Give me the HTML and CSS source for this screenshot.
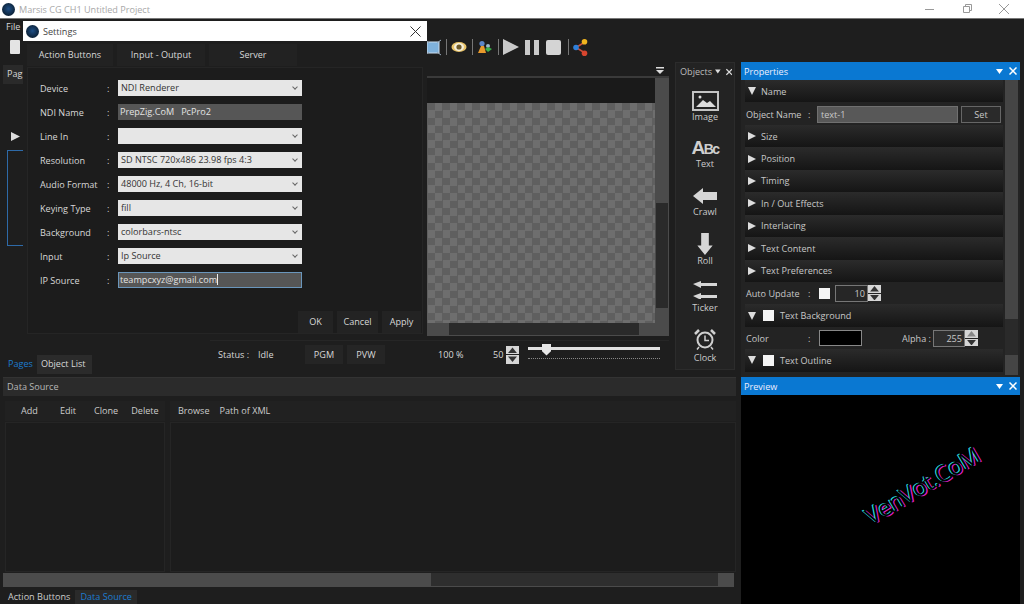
FILE: index.html
```html
<!DOCTYPE html>
<html lang="en">
<head>
  <meta charset="UTF-8" />
  <title>Marsis CG CH1 Untitled Project</title>
  <link rel="stylesheet" href="styles.css">
</head>
<body>
  <header class="titlebar">
    <div class="app-logo"></div>
    <span class="app-title">Marsis CG CH1 Untitled Project</span>
    <div class="win-btns">
      <svg width="12" height="12" viewBox="0 0 12 12"><path d="M1 6.500h9" stroke="#999" fill="none"/></svg>
      <svg width="12" height="12" viewBox="0 0 12 12"><path d="M2.500 3.500h6v6h-6zM4.500 3.500v-2h6v6h-2" stroke="#999" fill="none"/></svg>
      <svg width="12" height="12" viewBox="0 0 12 12"><path d="M1 1l10 10M11 1L1 11" stroke="#999" fill="none"/></svg>
    </div>
  </header>

  <div class="menubar">File</div>

  <div class="toolbar">
    <div class="tool-new"></div>
    <div class="tool-icons">
      <svg width="16" height="18" viewBox="0 0 16 18"><rect x="2" y="4" width="12" height="11" fill="#7fb2dc" stroke="#cde" /><path d="M0 2l4 3M16 2l-4 3M0 17l4-3M16 17l-4-3" stroke="#9ab" /></svg>
      <i class="tool-sep"></i>
      <svg width="16" height="12" viewBox="0 0 16 12"><ellipse cx="8" cy="6" rx="7.500" ry="5" fill="#e9c46a"/><ellipse cx="8" cy="6" rx="5" ry="4" fill="#f5efdc"/><circle cx="8" cy="6" r="2.600" fill="#6e5a2a"/></svg>
      <i class="tool-sep"></i>
      <svg width="16" height="14" viewBox="0 0 16 14"><circle cx="5" cy="3.500" r="2.600" fill="#5c86c8"/><path d="M1 13l3-7h3l2 7z" fill="#e89a2c"/><circle cx="11" cy="6" r="2" fill="#9bc"/><path d="M8 9l3-2 4 2-4 3z" fill="#3cb04a"/></svg>
      <i class="tool-sep"></i>
      <svg width="16" height="16" viewBox="0 0 16 16"><path d="M0 0l16 8-16 8z" fill="#c9c9c9"/></svg>
      <svg class="tool-pause" width="14" height="15" viewBox="0 0 14 15"><rect width="5" height="15" fill="#c9c9c9"/><rect x="9" width="5" height="15" fill="#c9c9c9"/></svg>
      <svg class="tool-stop" width="15" height="15" viewBox="0 0 15 15"><rect width="15" height="15" rx="2" fill="#d4d4d4"/></svg>
      <i class="tool-sep"></i>
      <svg width="15" height="17" viewBox="0 0 15 17"><path d="M12 3L3 8.500l9 5.500" stroke="#c8503c" stroke-width="1.600" fill="none"/><circle cx="11.500" cy="2.800" r="2.800" fill="#f0b41e"/><circle cx="3" cy="8.500" r="2.800" fill="#2f7fd8"/><circle cx="11.500" cy="14.200" r="2.800" fill="#d8452e"/></svg>
    </div>
  </div>

  <div class="workspace">
    <div class="left-col">
      <div class="top-row">
        <section class="pages-panel">
          <div class="pages-tab">Pag</div>
          <div class="pages-body">
            <svg class="pages-play" width="9" height="9" viewBox="0 0 9 9"><path d="M0 0l9 4.500L0 9z" fill="#ddd"/></svg>
            <div class="pages-thumb"></div>
          </div>
          <div class="doc-tabs">
            <span class="doc-tab active">Pages</span>
            <span class="doc-tab current">Object List</span>
          </div>
        </section>

        <section class="canvas-col">
          <div class="canvas-head">
            <svg width="8" height="8" viewBox="0 0 8 8"><path d="M0 0h8v1.500H0zM0 3h8L4 7z" fill="#ddd"/></svg>
          </div>
          <div class="canvas-frame">
            <div class="canvas-main">
              <div class="canvas-view">
                <div class="canvas-dark"></div>
                <div class="checker"></div>
              </div>
              <div class="vscroll"><div class="vscroll-thumb"></div></div>
            </div>
            <div class="hscroll"><div class="hscroll-thumb"></div></div>
          </div>
          <div class="status-bar">
            <span class="status-label">Status :</span>
            <span class="status-idle">Idle</span>
            <span class="status-btn first">PGM</span>
            <span class="status-btn">PVW</span>
            <span class="zoom-val">100 %</span>
            <span class="zoom-num">50</span>
            <div class="spin">
              <svg viewBox="0 0 8 5" width="8" height="5"><path d="M0 5l4-5 4 5z" fill="#333"/></svg>
              <svg viewBox="0 0 8 5" width="8" height="5"><path d="M0 0l4 5 4-5z" fill="#333"/></svg>
            </div>
            <div class="slider">
              <div class="slider-track"></div>
              <div class="slider-thumb"></div>
              <div class="slider-ticks"></div>
            </div>
          </div>
        </section>

        <aside class="objects-panel">
          <div class="objects-head">
            <span>Objects</span>
            <svg width="7" height="5" viewBox="0 0 7 5"><path d="M0 0h7L3.500 5z" fill="#ddd"/></svg>
            <svg class="close-x" width="8" height="8" viewBox="0 0 8 8"><path d="M0.500 0.500l7 7M7.500 0.500l-7 7" stroke="#ddd" stroke-width="1.500"/></svg>
          </div>
          <div class="object-item obj-image">
            <svg width="27" height="20" viewBox="0 0 27 20"><rect x="1" y="1" width="25" height="18" fill="none" stroke="#c4c4c4" stroke-width="2"/><circle cx="8" cy="6" r="1.500" fill="#ddd"/><path d="M4 16l7-7 4 3 3-2 6 6z" fill="#ddd"/></svg>
            <span>Image</span>
          </div>
          <div class="object-item obj-text">
            <span class="abc">A<small>Bc</small></span>
            <span>Text</span>
          </div>
          <div class="object-item obj-crawl">
            <svg width="24" height="16" viewBox="0 0 24 16"><path d="M0 8l10-8v4h14v8H10v4z" fill="#d6d6d6"/></svg>
            <span>Crawl</span>
          </div>
          <div class="object-item obj-roll">
            <svg width="16" height="22" viewBox="0 0 16 23"><path d="M8 23L0 13h4V0h8v13h4z" fill="#d6d6d6"/></svg>
            <span>Roll</span>
          </div>
          <div class="object-item obj-ticker">
            <svg width="24" height="18" viewBox="0 0 24 18"><path d="M0 3l8-3v2h16v3H8v2zM0 15l8-3v2h16v3H8v2z" fill="#d6d6d6"/></svg>
            <span>Ticker</span>
          </div>
          <div class="object-item obj-clock">
            <svg width="22" height="21" viewBox="0 0 22 21"><circle cx="11" cy="11" r="7.500" fill="none" stroke="#d0d0d0" stroke-width="2"/><path d="M11 6.500V11.500h4" stroke="#d0d0d0" stroke-width="1.500" fill="none"/><path d="M1 5l4-4M21 5l-4-4" stroke="#d0d0d0" stroke-width="2.500"/><path d="M5 18l-2 2.500M17 18l2 2.500" stroke="#d0d0d0" stroke-width="1.500"/></svg>
            <span>Clock</span>
          </div>
        </aside>
      </div>

      <section class="data-panel">
        <div class="data-head">Data Source</div>
        <div class="data-body">
          <div class="data-left">
            <div class="data-tools">
              <span class="data-btn add">Add</span>
              <span class="data-btn edit">Edit</span>
              <span class="data-btn clone">Clone</span>
              <span class="data-btn delete">Delete</span>
            </div>
            <div class="data-list"></div>
          </div>
          <div class="data-right">
            <div class="data-tools">
              <span class="data-btn browse">Browse</span>
              <span class="data-btn">Path of XML</span>
            </div>
            <div class="data-list"></div>
          </div>
        </div>
        <div class="data-scroll"><div class="data-scroll-thumb"></div></div>
      </section>

      <div class="bottom-tabs">
        <span class="bottom-tab">Action Buttons</span>
        <span class="bottom-tab active">Data Source</span>
      </div>
    </div>

    <div class="right-col">
      <section class="props-panel">
        <div class="blue-head">
          <span>Properties</span>
          <svg width="7" height="5" viewBox="0 0 7 5"><path d="M0 0h7L3.500 5z" fill="#fff"/></svg>
          <svg class="close-x" width="8" height="8" viewBox="0 0 8 8"><path d="M0.500 0.500l7 7M7.500 0.500l-7 7" stroke="#fff" stroke-width="1.500"/></svg>
        </div>
        <div class="props-body">
          <div class="props-list">
            <div class="prop-section"><i class="tri-down"></i>Name</div>
            <div class="prop-row name-row">
              <span class="prop-label">Object Name</span><span class="prop-colon">:</span>
              <span class="name-input">text-1</span>
              <span class="set-btn">Set</span>
            </div>
            <div class="prop-section"><i class="tri-right"></i>Size</div>
            <div class="prop-section"><i class="tri-right"></i>Position</div>
            <div class="prop-section"><i class="tri-right"></i>Timing</div>
            <div class="prop-section"><i class="tri-right"></i>In / Out Effects</div>
            <div class="prop-section"><i class="tri-right"></i>Interlacing</div>
            <div class="prop-section"><i class="tri-right"></i>Text Content</div>
            <div class="prop-section"><i class="tri-right"></i>Text Preferences</div>
            <div class="prop-row">
              <span class="prop-label">Auto Update</span><span class="prop-colon">:</span>
              <i class="check"></i>
              <span class="num-input auto-num">10</span>
              <div class="spin small">
                <svg viewBox="0 0 8 5" width="7" height="4"><path d="M0 5l4-5 4 5z" fill="#333"/></svg>
                <svg viewBox="0 0 8 5" width="7" height="4"><path d="M0 0l4 5 4-5z" fill="#333"/></svg>
              </div>
            </div>
            <div class="prop-section"><i class="tri-down"></i><i class="check sec-check"></i>Text Background</div>
            <div class="prop-row">
              <span class="prop-label">Color</span><span class="prop-colon">:</span>
              <i class="color-box"></i>
              <span class="alpha-label">Alpha :</span>
              <span class="num-input alpha-num">255</span>
              <div class="spin small">
                <svg viewBox="0 0 8 5" width="7" height="4"><path d="M0 5l4-5 4 5z" fill="#888"/></svg>
                <svg viewBox="0 0 8 5" width="7" height="4"><path d="M0 0l4 5 4-5z" fill="#333"/></svg>
              </div>
            </div>
            <div class="prop-section"><i class="tri-down"></i><i class="check sec-check"></i>Text Outline</div>
          </div>
          <div class="props-scroll"><div class="props-scroll-thumb"></div></div>
        </div>
      </section>

      <section class="preview-panel">
        <div class="blue-head">
          <span>Preview</span>
          <svg width="7" height="5" viewBox="0 0 7 5"><path d="M0 0h7L3.500 5z" fill="#fff"/></svg>
          <svg class="close-x" width="8" height="8" viewBox="0 0 8 8"><path d="M0.500 0.500l7 7M7.500 0.500l-7 7" stroke="#fff" stroke-width="1.500"/></svg>
        </div>
        <div class="preview-body">
          <span class="watermark">VenVot.CoM</span>
        </div>
      </section>
    </div>
  </div>

  <!-- settings dialog sits over the main window -->
  <div class="dialog">
    <div class="dialog-title">
      <div class="app-logo"></div>
      <span>Settings</span>
      <svg width="11" height="11" viewBox="0 0 11 11"><path d="M0.500 0.500l10 10M10.500 0.500l-10 10" stroke="#333" fill="none"/></svg>
    </div>
    <div class="dialog-tabs">
      <span class="dialog-tab">Action Buttons</span>
      <span class="dialog-tab wide">Input - Output</span>
      <span class="dialog-tab wide">Server</span>
    </div>
    <div class="dialog-body">
      <div class="form-row"><label>Device</label><b>:</b><div class="select">NDI Renderer<i></i></div></div>
      <div class="form-row"><label>NDI Name</label><b>:</b><div class="text-field">PrepZig.CoM&nbsp;&nbsp; PcPro2</div></div>
      <div class="form-row"><label>Line In</label><b>:</b><div class="select"><i></i></div></div>
      <div class="form-row"><label>Resolution</label><b>:</b><div class="select">SD NTSC 720x486 23.98 fps 4:3<i></i></div></div>
      <div class="form-row"><label>Audio Format</label><b>:</b><div class="select">48000 Hz, 4 Ch, 16-bit<i></i></div></div>
      <div class="form-row"><label>Keying Type</label><b>:</b><div class="select">fill<i></i></div></div>
      <div class="form-row"><label>Background</label><b>:</b><div class="select">colorbars-ntsc<i></i></div></div>
      <div class="form-row"><label>Input</label><b>:</b><div class="select">Ip Source<i></i></div></div>
      <div class="form-row"><label>IP Source</label><b>:</b><div class="text-field focused">teampcxyz@gmail.com<u></u></div></div>
      <div class="dialog-btns">
        <span class="dialog-btn ok">OK</span>
        <span class="dialog-btn cancel">Cancel</span>
        <span class="dialog-btn apply">Apply</span>
      </div>
    </div>
  </div>
</body>
</html>
```

FILE: styles.css
```css
* {
  margin: 0;
  padding: 0;
  box-sizing: border-box;
}

body {
  width: 1024px;
  height: 604px;
  overflow: hidden;
  background: #1e1e1e;
  color: #d8d8d8;
  font-family: "Open Sans", "Noto Sans", sans-serif;
  font-size: 9.1px;
  display: flex;
  flex-direction: column;
}

/* title bar */
.titlebar {
  height: 19px;
  background: #fff;
  border-bottom: 1px solid #777;
  display: flex;
  align-items: center;
  padding-left: 2px;
}

.app-logo {
  width: 13px;
  height: 13px;
  border-radius: 50%;
  background: radial-gradient(circle at 50% 45%, #1f4f86, #0c2238 70%);
}

.app-title {
  margin-left: 4px;
  color: #a8a8a8;
}

.win-btns {
  margin-left: auto;
  display: flex;
  gap: 25px;
  padding-right: 14px;
}

.menubar {
  height: 15px;
  padding: 1px 6px 0;
  line-height: 14px;
}

.toolbar {
  height: 28px;
  display: flex;
  align-items: center;
  padding: 0 10px 2px;
}

.tool-new {
  width: 10px;
  height: 14px;
  background: #e4e4e4;
  border-radius: 1px;
}

.tool-icons {
  margin-left: 405px;
  display: flex;
  align-items: center;
  gap: 4.500px;
}

.tool-sep {
  width: 1px;
  height: 16px;
  background: #777;
}

.tool-pause {
  margin-left: 1.500px;
}

.tool-stop {
  margin: 0 2.500px 0 2px;
}

/* main grid */
.workspace {
  flex: 1;
  min-height: 0;
  display: grid;
  grid-template-columns: 736px 279px;
  column-gap: 5px;
}

.left-col {
  display: flex;
  flex-direction: column;
  padding-left: 3px;
}

.top-row {
  height: 315px;
  display: flex;
}

.pages-panel {
  width: 207px;
  display: flex;
  flex-direction: column;
}

.pages-tab {
  width: 20px;
  height: 19px;
  margin-top: 3px;
  padding-left: 4px;
  line-height: 18px;
  background: #2a2a2a;
}

.pages-body {
  flex: 1;
  padding: 48px 0 0 8px;
}

.pages-play {
  display: block;
}

.pages-thumb {
  margin: 9px 0 0 -4px;
  width: 40px;
  height: 96px;
  border: 1px solid #2e6aa8;
}

.doc-tabs {
  height: 19px;
  display: flex;
  padding-left: 1px;
  margin-bottom: 3px;
}

.doc-tab {
  padding: 0 4px;
  line-height: 18px;
}

.doc-tab.active {
  color: #1c7cd0;
}

.doc-tab.current {
  background: #2b2b2b;
  width: 55px;
}

.canvas-col {
  width: 459px;
  display: flex;
  flex-direction: column;
}

.canvas-head {
  height: 14px;
  padding-top: 5px;
  display: flex;
  justify-content: flex-end;
  padding-right: 5px;
}

.canvas-frame {
  height: 260px;
  border-top: 2px solid #3a3a3a;
  display: flex;
  flex-direction: column;
}

.canvas-main {
  flex: 1;
  min-height: 0;
  display: flex;
}

.canvas-view {
  flex: 1;
  display: flex;
  flex-direction: column;
}

.canvas-dark {
  height: 25px;
  background: #1a1a1a;
}

.checker {
  flex: 1;
  background-color: #6e6e6e;
  background-image: conic-gradient(#5f5f5f 25%, transparent 0 50%, #5f5f5f 0 75%, transparent 0);
  background-size: 15px 15px;
}

.vscroll {
  width: 14px;
  background: #4b4b4b;
  padding-top: 125px;
}

.vscroll-thumb {
  height: 105px;
  background: #2a2a2a;
  margin: 0 1px;
}

.hscroll {
  height: 13px;
  background: #4b4b4b;
  padding-left: 239px;
}

.hscroll-thumb {
  width: 190px;
  height: 12px;
  background: #2a2a2a;
}

.status-bar {
  margin-top: 4px;
  height: 28px;
  display: flex;
  align-items: center;
  padding-left: 8px;
  border-top: 1px solid #262626;
}

.status-label {
  width: 40px;
}

.status-idle {
  width: 47px;
}

.status-btn {
  width: 38px;
  height: 19px;
  line-height: 19px;
  text-align: center;
  margin-left: 4px;
  background: #252525;
}

.status-btn.first {
  margin-left: 0;
}

.zoom-val {
  margin-left: 53px;
  width: 55px;
}

.zoom-num {
  width: 12px;
}

.spin {
  margin-left: 1px;
  width: 13px;
  height: 18px;
  display: flex;
  flex-direction: column;
  gap: 1px;
}

.spin svg {
  flex: 1;
  width: 100%;
  background: #d6d6d6;
  padding: 1px 2px;
}

.spin.small {
  height: 16px;
  margin-left: 0;
}

.slider {
  position: relative;
  margin-left: 9px;
  width: 132px;
  height: 20px;
}

.slider-track {
  margin-top: 2px;
  height: 3px;
  background: #e2e2e2;
}

.slider-ticks {
  margin-top: 8px;
  border-top: 1px dotted #888;
}

.slider-thumb {
  position: absolute;
  left: 14px;
  top: -1px;
  width: 9px;
  height: 12px;
  background: #e8e8e8;
  clip-path: polygon(0 0, 100% 0, 100% 65%, 50% 100%, 0 65%);
}

.objects-panel {
  margin-left: 6px;
  width: 60px;
  height: 308px;
  background: #232323;
  border: 1px solid #2c2c2c;
  display: flex;
  flex-direction: column;
  align-items: center;
}

.objects-head {
  width: 100%;
  height: 17px;
  display: flex;
  align-items: center;
  gap: 3px;
  padding-left: 4px;
  color: #bbb;
}

.close-x {
  margin-left: auto;
}

.objects-head .close-x {
  margin: 0 2px;
}

.object-item {
  display: flex;
  flex-direction: column;
  align-items: center;
  color: #ccc;
  line-height: 12px;
}

.obj-image {
  margin-top: 11px;
}

.obj-text {
  margin-top: 17px;
  gap: 2px;
}

.abc {
  height: 16px;
  line-height: 16px;
  font-size: 19px;
  font-weight: 700;
  letter-spacing: -1.500px;
  color: #cfcfcf;
  font-family: "Liberation Sans", sans-serif;
}

.abc small {
  font-size: 14px;
}

.obj-crawl {
  margin-top: 18px;
  gap: 2px;
}

.obj-roll {
  margin-top: 15px;
}

.obj-ticker {
  margin-top: 14px;
  gap: 3px;
}

.obj-clock {
  margin-top: 15px;
  gap: 2px;
}

/* data source */
.data-panel {
  height: 213px;
  display: flex;
  flex-direction: column;
  border-top: 1px solid #333;
}

.data-head {
  height: 18px;
  background: #2b2b2b;
  padding-left: 4px;
  line-height: 17px;
  color: #b8b8b8;
}

.data-body {
  flex: 1;
  min-height: 0;
  display: flex;
  gap: 5px;
  padding: 5px 0 0 2px;
}

.data-left {
  width: 160px;
  display: flex;
  flex-direction: column;
}

.data-right {
  flex: 1;
  display: flex;
  flex-direction: column;
}

.data-tools {
  height: 20px;
  display: flex;
  align-items: center;
  background: #212121;
}

.data-btn {
  line-height: 20px;
  color: #ccc;
}

.add { margin-left: 16px; }
.edit { margin-left: 22px; }
.clone { margin-left: 18px; }
.delete { margin-left: 13px; }
.browse { margin: 0 10px 0 8px; }

.data-list {
  flex: 1;
  margin-top: 1px;
  border: 1px solid #252525;
  background: #1c1c1c;
}

.data-scroll {
  height: 14px;
  margin: 1px 2px 3px 0;
  background: #4b4b4b;
  padding-left: 428px;
}

.data-scroll-thumb {
  width: 287px;
  height: 13px;
  background: #2e2e2e;
}

.bottom-tabs {
  flex: 1;
  display: flex;
  padding-left: 1px;
}

.bottom-tab {
  padding: 0 4px;
  line-height: 14px;
  color: #ccc;
}

.bottom-tab.active {
  color: #1c7cd0;
  background: #2a2a2a;
  margin-left: 1px;
  padding: 0 5px;
}

/* right column */
.right-col {
  display: flex;
  flex-direction: column;
  min-height: 0;
}

.blue-head {
  height: 18px;
  background: #0a78d2;
  color: #eef;
  display: flex;
  align-items: center;
  gap: 4px;
  padding: 0 3px;
}

.blue-head span {
  margin-right: auto;
}

.blue-head .close-x {
  margin-left: 2px;
}

.props-panel {
  height: 315px;
  display: flex;
  flex-direction: column;
}

.props-body {
  flex: 1;
  min-height: 0;
  display: flex;
  background: #232323;
  padding-left: 4px;
  overflow: hidden;
}

.props-list {
  width: 258px;
}

.prop-section,
.prop-row {
  height: 22.450px;
  display: flex;
  align-items: center;
  padding-left: 3px;
  color: #c8c8c8;
}

.prop-row {
  padding-left: 1px;
}

.prop-row.name-row {
  padding-top: 2px;
}

.prop-section {
  background: linear-gradient(#2b2b2b, #151515);
}

.tri-right {
  width: 0;
  height: 0;
  border-left: 8px solid #ddd;
  border-top: 4px solid transparent;
  border-bottom: 4px solid transparent;
  margin-right: 5px;
}

.tri-down {
  width: 0;
  height: 0;
  border-top: 8px solid #ddd;
  border-left: 4px solid transparent;
  border-right: 4px solid transparent;
  margin-right: 5px;
}

.prop-row .prop-label {
  width: 61px;
  white-space: nowrap;
}

.prop-colon {
  width: 9px;
  margin-left: 1px;
}

.name-input {
  width: 141px;
  height: 17px;
  line-height: 15px;
  padding-left: 3px;
  background: #585858;
  border: 1px solid #707070;
}

.set-btn {
  width: 40px;
  height: 17px;
  line-height: 15px;
  text-align: center;
  margin-left: 3px;
  border: 1px solid #666;
  background: #2a2a2a;
}

.check {
  display: block;
  width: 11px;
  height: 11px;
  background: #f4f4f4;
  margin-left: 2px;
}

.sec-check {
  margin: 0 6px 0 2px;
}

.num-input {
  height: 17px;
  line-height: 15px;
  text-align: right;
  padding-right: 2px;
  border: 1px solid #777;
  background: #262626;
}

.auto-num {
  width: 33px;
  margin-left: 5px;
}

.color-box {
  display: block;
  width: 43px;
  height: 16px;
  background: #000;
  border: 1px solid #888;
  margin-left: 2px;
}

.alpha-label {
  margin-left: 40px;
}

.alpha-num {
  width: 32px;
  margin-left: 2px;
  background: #2e2e2e;
}

.props-scroll {
  width: 13px;
  margin: 0 0 2px 2px;
  background: #454545;
  padding-top: 239px;
}

.props-scroll-thumb {
  height: 36px;
  background: #2a2a2a;
}

.preview-panel {
  flex: 1;
  display: flex;
  flex-direction: column;
}

.preview-body {
  position: relative;
  flex: 1;
  background: #000;
}

.watermark {
  position: absolute;
  left: 117px;
  top: 74px;
  transform: rotate(-30.500deg);
  font-size: 23px;
  letter-spacing: -0.300px;
  color: #000;
  text-shadow: -1px -1px 0 #27d0d8, 1px 1px 0 #e020c8;
  font-family: "Open Sans", sans-serif;
}

/* settings dialog */
.dialog {
  position: absolute;
  left: 23px;
  top: 21px;
  width: 404px;
  height: 319px;
  background: #1e1e1e;
  display: flex;
  flex-direction: column;
}

.dialog-title {
  height: 20px;
  background: #fff;
  color: #444;
  display: flex;
  align-items: center;
  padding: 0 6px 0 3px;
  gap: 4px;
}

.dialog-title svg {
  margin-left: auto;
}

.dialog-tabs {
  height: 22px;
  margin-top: 3px;
  padding-left: 4px;
  display: flex;
  gap: 4px;
}

.dialog-tab {
  width: 86px;
  line-height: 21px;
  text-align: center;
  background: #222;
}

.dialog-tab.wide {
  width: 88px;
}

.dialog-body {
  flex: 1;
  margin: 1px 4px 6px;
  padding: 12px 0 0 12px;
  background: #1c1c1c;
  border: 1px solid #252525;
  display: flex;
  flex-direction: column;
}

.form-row {
  height: 16px;
  margin-bottom: 8px;
  display: flex;
  align-items: center;
  flex: none;
}

.form-row label {
  width: 67px;
  white-space: nowrap;
}

.form-row b {
  width: 11px;
  font-weight: normal;
}

.select,
.text-field {
  position: relative;
  width: 184px;
  height: 16px;
  line-height: 15px;
  padding-left: 3px;
}

.select {
  background: #e6e6e6;
  color: #333;
}

.select i {
  position: absolute;
  right: 5px;
  top: 5px;
  width: 4px;
  height: 4px;
  border-right: 1px solid #666;
  border-bottom: 1px solid #666;
  transform: rotate(45deg);
}

.text-field {
  background: #565656;
  color: #e4e4e4;
  padding-left: 2px;
}

.text-field.focused {
  border: 1px solid #6a96bc;
  line-height: 13px;
  padding-left: 1px;
}

.text-field u {
  display: inline-block;
  width: 1px;
  height: 11px;
  background: #eee;
  vertical-align: -2px;
}

.dialog-btns {
  margin: auto 1px 0 0;
  align-self: flex-end;
  display: flex;
  gap: 4px;
}

.dialog-btn {
  height: 22px;
  line-height: 21px;
  text-align: center;
  background: #232323;
}

.dialog-btn.ok { width: 35px; }
.dialog-btn.cancel { width: 41px; }
.dialog-btn.apply { width: 39px; }
```
